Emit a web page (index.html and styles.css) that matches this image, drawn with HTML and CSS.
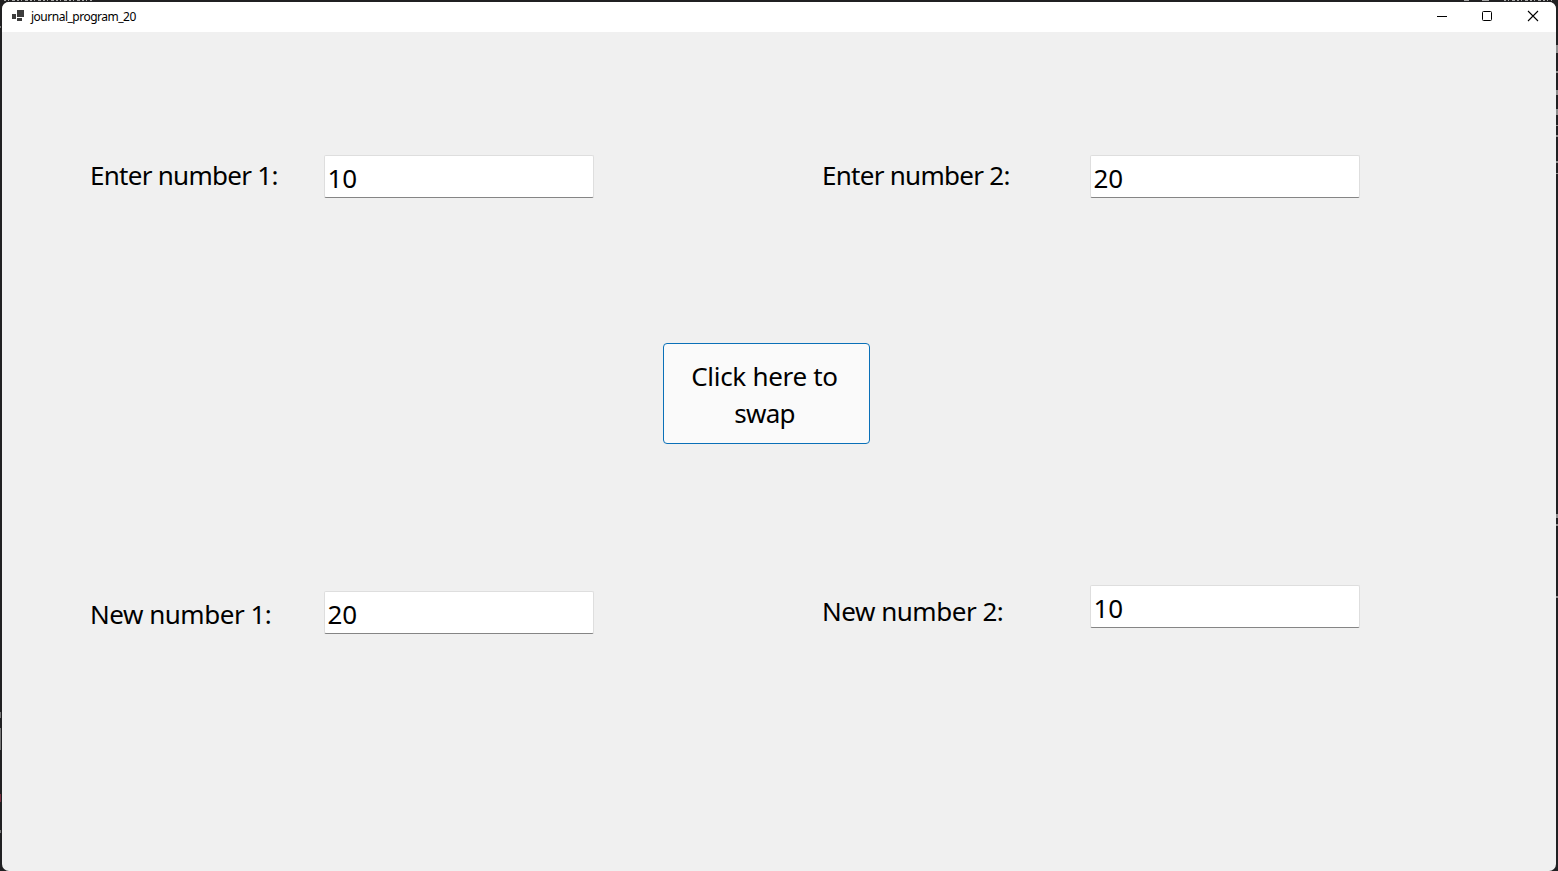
FILE: index.html
```
<!DOCTYPE html>
<html lang="en">
<head>
<meta charset="utf-8">
<title>journal_program_20</title>
<link rel="stylesheet" href="styles.css">
</head>
<body>
<svg class="backdrop" width="1558" height="871" viewBox="0 0 1558 871" aria-hidden="true">
  <path stroke="#a8a8a8" stroke-width="2" stroke-dasharray="2 2 1 3 3 2" d="M4 0H92M1504 0H1552"/>
  <path stroke="#a8a8a8" stroke-width="2" d="M1464 0h5M1482 0h7"/>
  <path stroke="#8c8c8c" stroke-width="2" d="M1557 45v8M1557 71v2M1557 90v5M1557 109v6M1557 125v1M1557 135v2M1557 161v2M1557 173v1M1557 514v4M1557 524v2M1557 596v2"/>
  <path stroke="#777" d="M.5 26v2M.5 712v6M.5 728v22M.5 830v3"/>
  <path stroke="#7a3040" d="M.5 794v8"/>
</svg>
<main class="window">
  <header class="titlebar">
    <svg class="app-icon" width="12" height="12" viewBox="0 0 12 12" fill="#3c3c3c"><path d="M5 0h7v7H5zM0 4h4v5H0zM5 8h5v3H5z"/></svg>
    <span class="title">journal_program_20</span>
    <div class="controls">
      <svg width="46" height="30" viewBox="0 0 46 30" fill="none" stroke="#000"><path d="M19 14.5h10"/></svg>
      <svg width="46" height="30" viewBox="0 0 46 30" fill="none" stroke="#000"><rect x="18.5" y="9.5" width="9" height="9" rx="1"/></svg>
      <svg width="46" height="30" viewBox="0 0 46 30" fill="none" stroke="#000" stroke-width="1.1"><path d="M18 9l10 10M28 9l-10 10"/></svg>
    </div>
  </header>
  <section class="form">
    <div class="row row-top">
      <span class="label enter">Enter number 1:</span>
      <div class="field">10</div>
      <span class="label enter second">Enter number 2:</span>
      <div class="field">20</div>
    </div>
    <button class="swap"><span>Click here to</span><span class="line-two">swap</span></button>
    <div class="row row-bottom">
      <span class="label low">New number 1:</span>
      <div class="field low-field">20</div>
      <span class="label second">New number 2:</span>
      <div class="field">10</div>
    </div>
  </section>
</main>
</body>
</html>
```
FILE: styles.css
```
* { box-sizing: border-box; }
body {
  margin: 0;
  width: 1558px;
  height: 871px;
  padding: 2px 2px 0;
  background: #202022;
  overflow: hidden;
  font-family: "Noto Sans", "Open Sans", sans-serif;
  color: #000;
}
.backdrop { position: absolute; top: 0; left: 0; }
.window {
  position: relative;
  height: 869px;
  border-radius: 7px;
  overflow: hidden;
  background: #f0f0f0;
}
.titlebar {
  display: flex;
  height: 30px;
  padding-left: 10px;
  background: #fff;
}
.app-icon { margin-top: 8px; }
.title {
  margin-left: 7px;
  font-size: 12px;
  line-height: 29px;
  letter-spacing: -0.5px;
}
.controls { display: flex; margin-left: auto; }
.form { display: flex; flex-direction: column; }
.row {
  display: flex;
  align-items: flex-start;
  padding-left: 88px;
}
.row-top { margin-top: 123px; }
.row-bottom { margin-top: 141px; }
.label {
  width: 234px;
  height: 42px;
  font-size: 26px;
  line-height: 40px;
  letter-spacing: -0.48px;
  white-space: nowrap;
}
.enter { letter-spacing: -0.72px; }
.row-bottom .label { padding-top: 6px; }
.row-bottom .low { padding-top: 9px; }
.second { width: 268px; margin-left: 228px; }
.field {
  width: 270px;
  height: 43px;
  padding-left: 2.5px;
  border: 1px solid #dedede;
  border-bottom-color: #858585;
  border-radius: 2px;
  background: #fff;
  font-size: 26px;
  line-height: 45px;
  letter-spacing: -0.2px;
}
.low-field { margin-top: 6px; }
.swap {
  display: flex;
  flex-direction: column;
  align-items: center;
  width: 207px;
  height: 101px;
  margin: 145px 0 0 661px;
  padding: 14px 4px 0 0;
  border: 1px solid #0a70b8;
  border-radius: 4px;
  background: #fafafa;
  color: #000;
  font: 26px/37px "Noto Sans", sans-serif;
  letter-spacing: -0.3px;
}
.line-two { letter-spacing: -0.7px; }
```
